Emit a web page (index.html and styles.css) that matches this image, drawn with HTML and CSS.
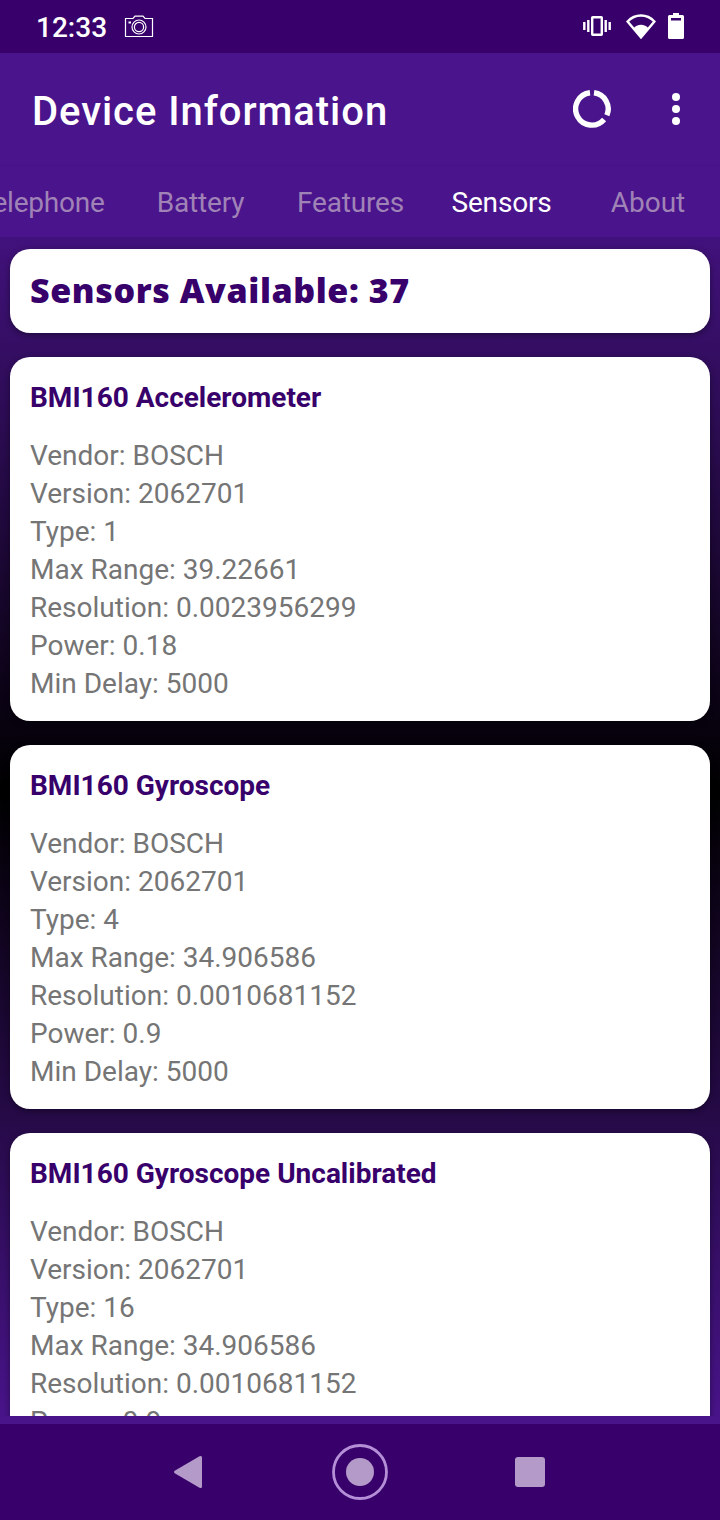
FILE: index.html
```html
<!DOCTYPE html>
<html lang="en">
<head>
    <meta charset="UTF-8">
    <meta name="viewport" content="width=device-width, initial-scale=1.0">
    <title>Device Information</title>
    <link rel="stylesheet" href="styles.css">
</head>
<body>
    <div class="status-bar">
        <span class="clock">12:33</span>
        <svg class="camera" width="30" height="24" viewBox="0 0 30 24" fill="none" stroke="#fff" stroke-width="1.2">
            <path d="M1.5 3.5H9L11 1.2H19L21 3.5H28.5V21.5H1.5Z"/>
            <circle cx="15" cy="12" r="7"/>
            <circle cx="15" cy="12" r="4.6"/>
            <path d="M4.5 7.5H7" stroke-width="2"/>
        </svg>
        <svg class="vibrate" width="28" height="20" viewBox="0 0 28 20" fill="none" stroke="#fff">
            <rect x="9.2" y="1.2" width="9.6" height="17.6" stroke-width="2.4" rx="0.5"/>
            <path d="M1.3 6V14M5.3 4V16M22.7 4V16M26.7 6V14" stroke-width="2.4"/>
        </svg>
        <svg class="wifi" width="30" height="26" viewBox="0 0 30 26">
            <path d="M1.6 7.5C9 -0.5 21 -0.5 28.4 7.5L15 23.5Z" fill="none" stroke="#fff" stroke-width="2.4"/>
            <path d="M7.5 14.5C11 9.5 19 9.5 22.5 14.5L15 24Z" fill="#fff"/>
        </svg>
        <svg class="battery" width="16" height="26" viewBox="0 0 16 26">
            <path d="M5 0H11V2H14.5Q16 2 16 3.5V24.5Q16 26 14.5 26H1.5Q0 26 0 24.5V3.5Q0 2 1.5 2H5Z" fill="#fff"/>
            <rect x="3" y="5" width="10" height="2.5" fill="#38006b"/>
        </svg>
    </div>

    <header class="toolbar">
        <h1>Device Information</h1>
        <svg class="usage" width="38" height="38" viewBox="0 0 38 38" fill="none" stroke="#fff" stroke-width="5.4">
            <path d="M21 2.8A16.2 16.2 0 0 1 33.9 25.2"/>
            <path d="M31.1 29.5A16.2 16.2 0 1 1 17 2.8"/>
        </svg>
        <svg class="more" width="8" height="32" viewBox="0 0 8 32" fill="#fff">
            <circle cx="4" cy="4" r="4"/>
            <circle cx="4" cy="16" r="4"/>
            <circle cx="4" cy="28" r="4"/>
        </svg>
    </header>

    <nav class="tabs">
        <a class="tab telephone">Telephone</a>
        <a class="tab">Battery</a>
        <a class="tab">Features</a>
        <a class="tab active">Sensors</a>
        <a class="tab about">About</a>
    </nav>

    <main class="content">
        <div class="card summary"><span>Sensors Available: 37</span></div>

        <div class="card">
            <h2>BMI160 Accelerometer</h2>
            <p>Vendor: BOSCH</p>
            <p>Version: 2062701</p>
            <p>Type: 1</p>
            <p>Max Range: 39.22661</p>
            <p>Resolution: 0.0023956299</p>
            <p>Power: 0.18</p>
            <p>Min Delay: 5000</p>
        </div>

        <div class="card">
            <h2>BMI160 Gyroscope</h2>
            <p>Vendor: BOSCH</p>
            <p>Version: 2062701</p>
            <p>Type: 4</p>
            <p>Max Range: 34.906586</p>
            <p>Resolution: 0.0010681152</p>
            <p>Power: 0.9</p>
            <p>Min Delay: 5000</p>
        </div>

        <div class="card">
            <h2>BMI160 Gyroscope Uncalibrated</h2>
            <p>Vendor: BOSCH</p>
            <p>Version: 2062701</p>
            <p>Type: 16</p>
            <p>Max Range: 34.906586</p>
            <p>Resolution: 0.0010681152</p>
            <p>Power: 0.9</p>
        </div>
    </main>

    <footer class="nav-bar">
        <svg width="30" height="34" viewBox="0 0 30 34" fill="#b39ac8">
            <path d="M1.7 15.7L26.5 1.3Q29 0.2 29 2.5V31.5Q29 33.8 26.5 32.7L1.7 18.3Q0 17 1.7 15.7Z"/>
        </svg>
        <svg class="home" width="56" height="56" viewBox="0 0 56 56">
            <circle cx="28" cy="28" r="26.5" fill="none" stroke="#b48fd8" stroke-width="2.8"/>
            <circle cx="28" cy="28" r="14" fill="#b39ac8"/>
        </svg>
        <div class="recent"></div>
    </footer>
</body>
</html>
```
FILE: styles.css
```css
* {
    box-sizing: border-box;
}
body {
    font-family: Roboto, sans-serif;
    margin: 0;
    height: 1520px;
    display: flex;
    flex-direction: column;
    overflow: hidden;
    background: linear-gradient(#4a148c 11%, #000 52%, #4a148c 94%);
}
svg {
    display: block;
    flex: none;
}
.status-bar {
    height: 53px;
    flex: none;
    display: flex;
    align-items: center;
    padding: 0 36px;
    background-color: #38006b;
    color: white;
}
.clock {
    font-size: 28px;
    font-weight: 500;
    width: 88px;
    padding-top: 2px;
}
.vibrate {
    margin-left: auto;
    margin-bottom: 1px;
}
.wifi {
    margin-left: 15px;
}
.battery {
    margin-left: 12px;
    margin-bottom: 1px;
}
.toolbar {
    height: 112px;
    flex: none;
    display: flex;
    align-items: center;
    padding: 0 40px 0 32px;
    background-color: #4a148c;
    color: white;
}
.toolbar h1 {
    margin: 4px 0 0;
    flex: 1;
    font-size: 40px;
    font-weight: 500;
    letter-spacing: 0.95px;
}
.more {
    margin-left: 61px;
}
.tabs {
    height: 72px;
    flex: none;
    display: flex;
    justify-content: flex-end;
    background-color: #4a148c;
    border-top: 1px solid #461285;
}
.tab {
    width: 150px;
    flex: none;
    padding-top: 3px;
    padding-right: 1px;
    line-height: 68px;
    text-align: center;
    font-size: 28px;
    letter-spacing: -0.2px;
    color: #a083b6;
}
.tab.telephone {
    width: 168px;
    padding-right: 2px;
}
.tab.about {
    width: 144px;
    padding-right: 0;
    letter-spacing: 0;
}
.tab.active {
    padding-left: 2px;
    color: white;
}
.content {
    height: 1179px;
    flex: none;
    padding: 12px 10px 0;
    overflow: hidden;
}
.card {
    height: 364px;
    margin-bottom: 24px;
    padding: 21px 20px 0;
    background-color: white;
    border-radius: 20px;
    box-shadow: 0 2px 6px rgba(0, 0, 0, 0.4);
}
.card h2 {
    margin: 0 0 19px;
    font-size: 28px;
    font-weight: bold;
    line-height: 40px;
    color: #38006b;
}
.card p {
    margin: 0;
    font-size: 28px;
    line-height: 38px;
    color: #757575;
}
.card.summary {
    height: 84px;
    padding-top: 19px;
    font-family: "Open Sans", sans-serif;
    font-size: 34px;
    font-weight: 800;
    line-height: 44px;
    letter-spacing: 0.6px;
    color: #38006b;
}
.nav-bar {
    height: 96px;
    margin-top: auto;
    flex: none;
    display: flex;
    align-items: center;
    padding-left: 173px;
    background-color: #38006b;
}
.home {
    margin-left: 129px;
}
.recent {
    width: 30px;
    height: 30px;
    margin-left: 127px;
    border-radius: 3px;
    background-color: #b39ac8;
}
```
